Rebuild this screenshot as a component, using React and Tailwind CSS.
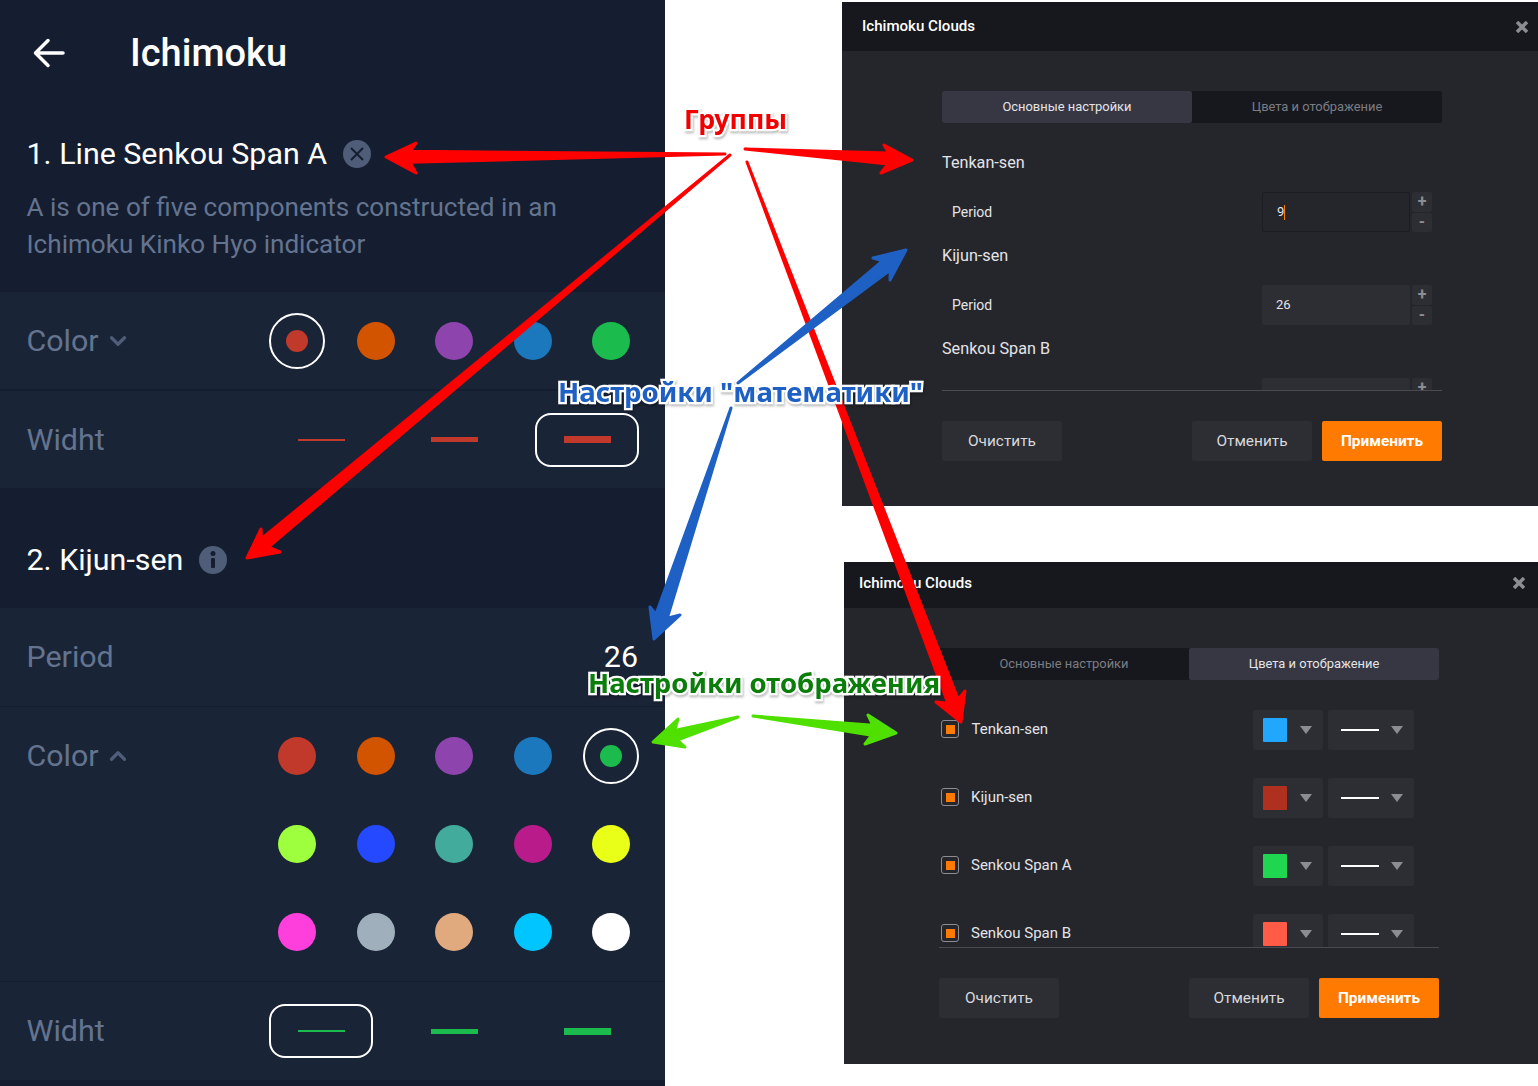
import { ChevronDown, ChevronUp } from 'lucide-react';

const arrows = [
    { from: [725, 154], tip: [386, 157], a: [416, 143], b: [416, 173], w: 11, fill: '#ff0000' },
    { from: [745, 149], tip: [912, 160], a: [884, 145], b: [881, 173], w: 11, fill: '#ff0000' },
    { from: [730, 155], tip: [247, 558], a: [261, 529], b: [280, 552], w: 11, fill: '#ff0000' },
    { from: [747, 162], tip: [961, 722], a: [936, 702], b: [965, 691], w: 11, fill: '#ff0000' },
    { from: [738, 383], tip: [906, 250], a: [873, 258], b: [890, 280], w: 12, fill: '#1e60c4' },
    { from: [731, 408], tip: [654, 639], a: [650, 607], b: [680, 615], w: 12, fill: '#1e60c4' },
    { from: [738, 717], tip: [653, 742], a: [678, 719], b: [685, 747], w: 10, fill: '#4fe000' },
    { from: [753, 716], tip: [896, 733], a: [868, 715], b: [865, 744], w: 10, fill: '#4fe000' },
];

const arrowPoints = ({ from, tip, a, b, w }) => {
    // shaft meets the head part way along the axis, starts from a point
    const dx = tip[0] - from[0];
    const dy = tip[1] - from[1];
    const len = Math.hypot(dx, dy);
    const ux = dx / len;
    const uy = dy / len;
    const back = ((tip[0] - (a[0] + b[0]) / 2) * ux + (tip[1] - (a[1] + b[1]) / 2) * uy) * 0.8;
    const bx = tip[0] - ux * back;
    const by = tip[1] - uy * back;
    const side = (a[0] - tip[0]) * -uy + (a[1] - tip[1]) * ux;
    const s = side > 0 ? 1 : -1;
    const p1 = [bx - uy * (w / 2) * s, by + ux * (w / 2) * s];
    const p2 = [bx + uy * (w / 2) * s, by - ux * (w / 2) * s];
    return [from, p1, a, tip, b, p2].map((p) => p.join(',')).join(' ');
};

const SectionRow = ({ label, children, className = 'h-[97px]' }) => (
    <div className={`flex bg-[#1a2437] ${className}`}>
        <div className="text-[30.400px] leading-[36px] text-[#64748f] pl-[26.500px]">{label}</div>
        {children}
    </div>
);

const Dot = ({ color, selected }) => (
    <div className="flex items-center justify-center h-[56px]">
        {selected ? (
            <div className="flex items-center justify-center w-[56px] h-[56px] rounded-full border-2 border-white">
                <div className="w-[22px] h-[22px] rounded-full" style={{ background: color }} />
            </div>
        ) : (
            <div className="w-[38px] h-[38px] rounded-full" style={{ background: color }} />
        )}
    </div>
);

const WidthPicker = ({ color, selected }) => (
    <div className="ml-auto mr-[11.500px] grid grid-cols-[repeat(3,133px)] self-center">
        {[2, 5, 7].map((h, i) => (
            <div key={h} className="flex justify-center">
                <div className={`flex items-center justify-center w-[104px] h-[54px] rounded-[16px] ${i === selected ? 'border-2 border-white' : ''}`}>
                    <div className="w-[47px]" style={{ height: h, background: color }} />
                </div>
            </div>
        ))}
    </div>
);

const firstColors = ['#c0392b', '#d35400', '#8e44ad', '#1b78bd', '#1cbb4d'];
const moreColors = ['#9eff3f', '#2549ff', '#43ab9b', '#b91c8a', '#e9ff18', '#ff3fdc', '#a0afbc', '#e0a97e', '#00c5ff', '#ffffff'];

const LeftPanel = () => (
    <div className="w-[665px] h-[1086px] shrink-0 bg-[#151d30] text-white">
        <div className="flex items-center h-[106px] pl-[33px]">
            <svg width="32" height="30" viewBox="0 0 32 30" fill="none" stroke="#fff" strokeWidth="3.5" strokeLinecap="round" strokeLinejoin="round">
                <path d="M30 15H3M15 2.500L2.500 15 15 27.500" />
            </svg>
            <div className="ml-[65px] text-[38px] leading-[46px] font-medium">Ichimoku</div>
        </div>
        <div className="flex items-center h-[36px] mt-[30px] pl-[26.500px]">
            <span className="text-[30.400px] leading-[36px]">1. Line Senkou Span A</span>
            <svg className="ml-[16px]" width="28" height="28" viewBox="0 0 28 28">
                <circle cx="14" cy="14" r="14" fill="#4f5d78" />
                <path d="M8 8l12 12M20 8L8 20" stroke="#151d30" strokeWidth="2" />
            </svg>
        </div>
        <div className="mt-[17px] pl-[26.500px] text-[26.100px] leading-[37px] text-[#64748f] h-[103px]">
            A is one of five components constructed in an
            <br />
            Ichimoku Kinko Hyo indicator
        </div>

        <SectionRow label={<span className="flex items-center h-[97px]">Color<ChevronDown className="ml-[6px] text-[#4f5d78]" size={26} strokeWidth={3} /></span>}>
            <div className="ml-auto mr-[14.500px] grid grid-cols-[repeat(5,78.500px)] self-center">
                {firstColors.map((c, i) => <Dot key={c} color={c} selected={i === 0} />)}
            </div>
        </SectionRow>
        <SectionRow label={<span className="flex items-center h-[97px]">Widht</span>} className="h-[97px] mt-[2px]">
            <WidthPicker color="#c0392b" selected={2} />
        </SectionRow>

        <div className="flex items-center h-[120px] pt-[24px] pl-[26.500px]">
            <span className="text-[30.400px] leading-[36px]">2. Kijun-sen</span>
            <svg className="ml-[16px]" width="28" height="28" viewBox="0 0 28 28">
                <circle cx="14" cy="14" r="14" fill="#4f5d78" />
                <circle cx="14" cy="7.500" r="2.500" fill="#151d30" />
                <rect x="12" y="12" width="4" height="10" rx="1" fill="#151d30" />
            </svg>
        </div>

        <SectionRow label={<span className="flex items-center h-[98px]">Period</span>} className="h-[98px]">
            <div className="ml-auto mr-[27px] self-center text-[30.400px] leading-[36px] text-white">26</div>
        </SectionRow>
        <SectionRow label={<span className="flex items-center h-[56px] mt-[21px]">Color<ChevronUp className="ml-[6px] text-[#4f5d78]" size={26} strokeWidth={3} /></span>} className="h-[274px] mt-[1px]">
            <div className="ml-auto mr-[14.500px] mt-[21px] self-start grid grid-cols-[repeat(5,78.500px)] gap-y-[32px]">
                {firstColors.map((c, i) => <Dot key={c} color={c} selected={i === 4} />)}
                {moreColors.map((c) => <Dot key={c} color={c} />)}
            </div>
        </SectionRow>
        <SectionRow label={<span className="flex items-center h-[98px]">Widht</span>} className="h-[98px] mt-[1px]">
            <WidthPicker color="#1cbb4d" selected={0} />
        </SectionRow>
    </div>
);

const Tabs = ({ active }) => (
    <div className="flex w-[500px] h-[32px] rounded-[2px] bg-[#17181d] text-[12.900px] text-[#7c7d84]">
        {['Основные настройки', 'Цвета и отображение'].map((t, i) => (
            <div key={t} className={`flex flex-1 items-center justify-center rounded-[2px] ${i === active ? 'bg-[#363743] text-[#e4e4e8]' : ''}`}>{t}</div>
        ))}
    </div>
);

const Footer = () => (
    <div className="flex w-[500px] text-[15.400px] text-[#d8d8dc]">
        <div className="flex items-center justify-center w-[120px] h-[40px] pt-[1px] rounded-[2px] bg-[#2d2e34]">Очистить</div>
        <div className="flex items-center justify-center w-[120px] h-[40px] pt-[1px] ml-[130px] rounded-[2px] bg-[#2d2e34]">Отменить</div>
        <div className="flex items-center justify-center w-[120px] h-[40px] pt-[1px] ml-[10px] rounded-[2px] bg-[#ff7a00] text-white font-bold">Применить</div>
    </div>
);

const DialogHeader = ({ height, padding }) => (
    <div className={`flex items-center justify-between bg-[#17181d] ${height} ${padding}`}>
        <span className="text-[15.100px] font-medium text-white">Ichimoku Clouds</span>
        <svg width="12" height="12" viewBox="0 0 12 12" stroke="#8c8d92" strokeWidth="3.500">
            <path d="M1 1l10 10M11 1L1 11" />
        </svg>
    </div>
);

const Stepper = () => (
    <div className="flex flex-col justify-between w-[20px] h-[40px] ml-[2px]">
        <div className="flex items-center justify-center h-[19.500px] bg-[#2d2e34] rounded-[2px] text-[#8c8d92] text-[16px] font-bold leading-none">+</div>
        <div className="flex items-center justify-center h-[19.500px] bg-[#2d2e34] rounded-[2px] text-[#8c8d92] text-[16px] font-bold leading-none">-</div>
    </div>
);

const PeriodField = ({ label, value, focused }) => (
    <div>
        <div className="h-[20px] text-[16.200px] leading-[22px] text-[#e4e4e8]">{label}</div>
        <div className="flex items-center h-[40px] mt-[20px] mb-[13px] pl-[10px]">
            <span className="text-[14px] text-[#e4e4e8]">Period</span>
            <div className={`flex items-center w-[148px] h-[40px] ml-auto rounded-[2px] pl-[14px] text-[13px] text-[#e4e4e8] ${focused ? 'border border-[#1c1d22] bg-[#25262b]' : 'bg-[#2d2e34]'}`}>
                {value}
                {focused && <span className="w-[1px] h-[15px] bg-[#ff7a00]" />}
            </div>
            <Stepper />
            <div className="w-[10px]" />
        </div>
    </div>
);

const Caret = () => <div className="w-0 h-0 border-x-[6.500px] border-x-transparent border-t-[8px] border-t-[#8c8d92]" />;

const DisplayRow = ({ label, color, labelClass = 'ml-[12px]' }) => (
    <div className="flex items-center h-[40px] mb-[28px]">
        <div className="flex items-center justify-center w-[18px] h-[18px] ml-[2px] -translate-y-[1px] rounded-[3px] border border-[#8c8d92]">
            <div className="w-[9px] h-[9px] bg-[#ff7a00]" />
        </div>
        <span className={`text-[15px] text-[#e4e4e8] -translate-y-[1px] ${labelClass}`}>{label}</span>
        <div className="flex items-center w-[70px] h-[40px] ml-auto rounded-[2px] bg-[#2d2e34] pl-[10px]">
            <div className="w-[24px] h-[24px] rounded-[1px]" style={{ background: color }} />
            <div className="ml-[13px]"><Caret /></div>
        </div>
        <div className="flex items-center w-[86px] h-[40px] ml-[5px] mr-[25px] rounded-[2px] bg-[#2d2e34] pl-[13px]">
            <div className="w-[38px] h-[2px] bg-white" />
            <div className="ml-[12px]"><Caret /></div>
        </div>
    </div>
);

const Annotation = ({ className, children }) => (
    <div className={`absolute whitespace-nowrap font-bold [font-family:'Noto_Sans',sans-serif] leading-[36px] [-webkit-text-stroke:4.500px_white] [paint-order:stroke_fill] drop-shadow-[1px_2px_1px_rgba(0,0,0,0.25)] ${className}`}>
        {children}
    </div>
);

export default function App() {
    return (
        <div className="relative flex w-[1538px] h-[1086px] overflow-hidden bg-white [font-family:Roboto,sans-serif]">
            <LeftPanel />
            <div className="ml-[177px] w-[696px] shrink-0">
                <div className="mt-[2px] h-[504px] bg-[#25262b]">
                    <DialogHeader height="h-[49px]" padding="pl-[20px] pr-[10px]" />
                    <div className="pl-[100px] pt-[40px]">
                        <Tabs active={0} />
                        <div className="w-[500px] h-[268px] overflow-hidden pt-[29px] border-b border-[#4a4b50]">
                            <PeriodField label="Tenkan-sen" value="9" focused />
                            <PeriodField label="Kijun-sen" value="26" />
                            <PeriodField label="Senkou Span B" value="9" />
                        </div>
                        <div className="mt-[30px]"><Footer /></div>
                    </div>
                </div>
                <div className="mt-[56px] ml-[2px] h-[502px] bg-[#25262b]">
                    <DialogHeader height="h-[46px]" padding="pl-[15px] pr-[13px] pb-[4px]" />
                    <div className="pl-[95px] pt-[40px]">
                        <Tabs active={1} />
                        <div className="w-[500px] h-[268px] overflow-hidden pt-[30px] border-b border-[#4a4b50]">
                            <DisplayRow label="Tenkan-sen" color="#22a7ff" labelClass="ml-[12.500px]" />
                            <DisplayRow label="Kijun-sen" color="#b03020" />
                            <DisplayRow label="Senkou Span A" color="#20d650" />
                            <DisplayRow label="Senkou Span B" color="#ff5b47" />
                        </div>
                        <div className="mt-[30px]"><Footer /></div>
                    </div>
                </div>
            </div>

            <svg className="absolute inset-0 pointer-events-none" width="1538" height="1086" viewBox="0 0 1538 1086">
                {arrows.map((a) => (
                    <polygon key={a.tip.join()} points={arrowPoints(a)} fill={a.fill} stroke={a.fill} strokeWidth="3" strokeLinejoin="round" />
                ))}
            </svg>
            <Annotation className="left-[684px] top-[101px] text-[26.700px] text-[#f00000]">Группы</Annotation>
            <Annotation className="left-[558px] top-[373px] text-[27.600px] text-[#1e60c4]">Настройки "математики"</Annotation>
            <Annotation className="left-[588px] top-[665px] text-[27.500px] text-[#0a7d0a]">Настройки отображения</Annotation>
        </div>
    );
}
